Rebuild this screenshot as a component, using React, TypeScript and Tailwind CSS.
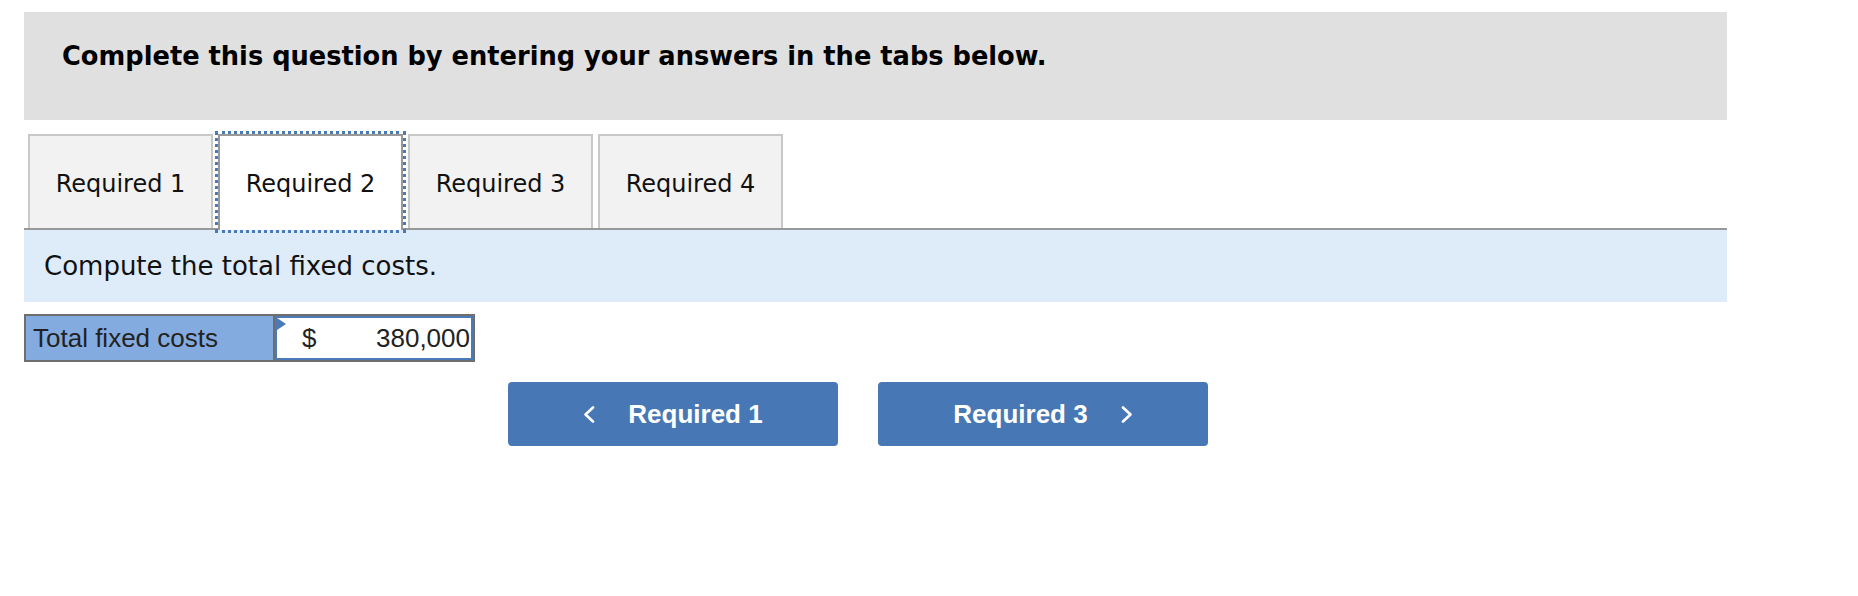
import React from "react";

const TABS = ["Required 1", "Required 2", "Required 3", "Required 4"];
const ACTIVE = 1;

function Chevron({ dir }: { dir: "left" | "right" }) {
  const pts = dir === "left" ? "10,1.5 2.5,8.5 10,15.5" : "2,1.5 9.5,8.5 2,15.5";
  return (
    <svg width="12" height="17" viewBox="0 0 12 17" fill="none">
      <polyline points={pts} stroke="white" strokeWidth="2.6" strokeLinecap="round" strokeLinejoin="round" />
    </svg>
  );
}

export default function App() {
  return (
    <div
      className="min-h-screen bg-white pt-[12px] pl-[24px]"
      style={{ fontFamily: "Verdana, 'DejaVu Sans', sans-serif" }}
    >
      <div className="w-[1703px]">
        {/* Instructions header */}
        <div className="h-[108px] bg-[#e0e0e0] pl-[38px] pt-[30px]">
          <h1 className="text-[25.7px] leading-[28px] font-bold text-black">
            Complete this question by entering your answers in the tabs below.
          </h1>
        </div>

        {/* Tabs */}
        <div className="mt-[14px] flex gap-[5px] pl-[4px] border-b-2 border-[#999999]">
          {TABS.map((t, i) =>
            i === ACTIVE ? (
              <div
                key={t}
                className="w-[185px] h-[96px] -mb-[2px] pt-[2px] flex items-center justify-center border-2 border-b-0 border-[#999999] bg-white text-[24px] text-[#111] outline-3 outline-dotted outline-[#4a7ab8]"
              >
                {t}
              </div>
            ) : (
              <div
                key={t}
                className="w-[185px] h-[94px] pt-[4px] flex items-center justify-center border-2 border-b-0 border-[#c8c8c8] bg-[#f2f2f2] text-[24px] text-[#111]"
              >
                {t}
              </div>
            )
          )}
        </div>

        {/* Prompt */}
        <div className="h-[72px] bg-[#deebf8] pl-[20px] flex items-center text-[26px] text-[#111]">
          Compute the total fixed costs.
        </div>

        {/* Answer row */}
        <div
          className="mt-[12px] inline-flex border-2 border-[#6e6e6e]"
          style={{ fontFamily: "'Liberation Sans', Arial, sans-serif" }}
        >
          <div className="w-[247px] h-[44px] bg-[#84abdf] pl-[7px] flex items-center text-[26px] text-[#222]">
            Total fixed costs
          </div>
          <div className="border-l-2 border-[#6e6e6e] bg-white">
            <div className="relative w-[198px] h-[44px] border-2 border-[#4a7ab8] flex items-center justify-between pl-[25px] pr-[1px] text-[26px] text-[#222]">
              <span
                className="absolute left-0 top-0 w-0 h-0 border-t-[6px] border-b-[6px] border-l-[9px] border-t-transparent border-b-transparent border-l-[#4a7ab8]"
              />
              <span>$</span>
              <span>380,000</span>
            </div>
          </div>
        </div>

        {/* Navigation */}
        <div
          className="mt-[20px] ml-[484px] flex gap-[40px]"
          style={{ fontFamily: "'Liberation Sans', Arial, sans-serif" }}
        >
          <button className="w-[330px] h-[64px] rounded-[4px] bg-[#4777b5] flex items-center justify-center gap-[33px] text-white text-[26px] font-bold">
            <Chevron dir="left" />
            <span>Required 1</span>
          </button>
          <button className="w-[330px] h-[64px] rounded-[4px] bg-[#4777b5] flex items-center justify-center gap-[33px] text-white text-[26px] font-bold">
            <span>Required 3</span>
            <Chevron dir="right" />
          </button>
        </div>
      </div>
    </div>
  );
}
